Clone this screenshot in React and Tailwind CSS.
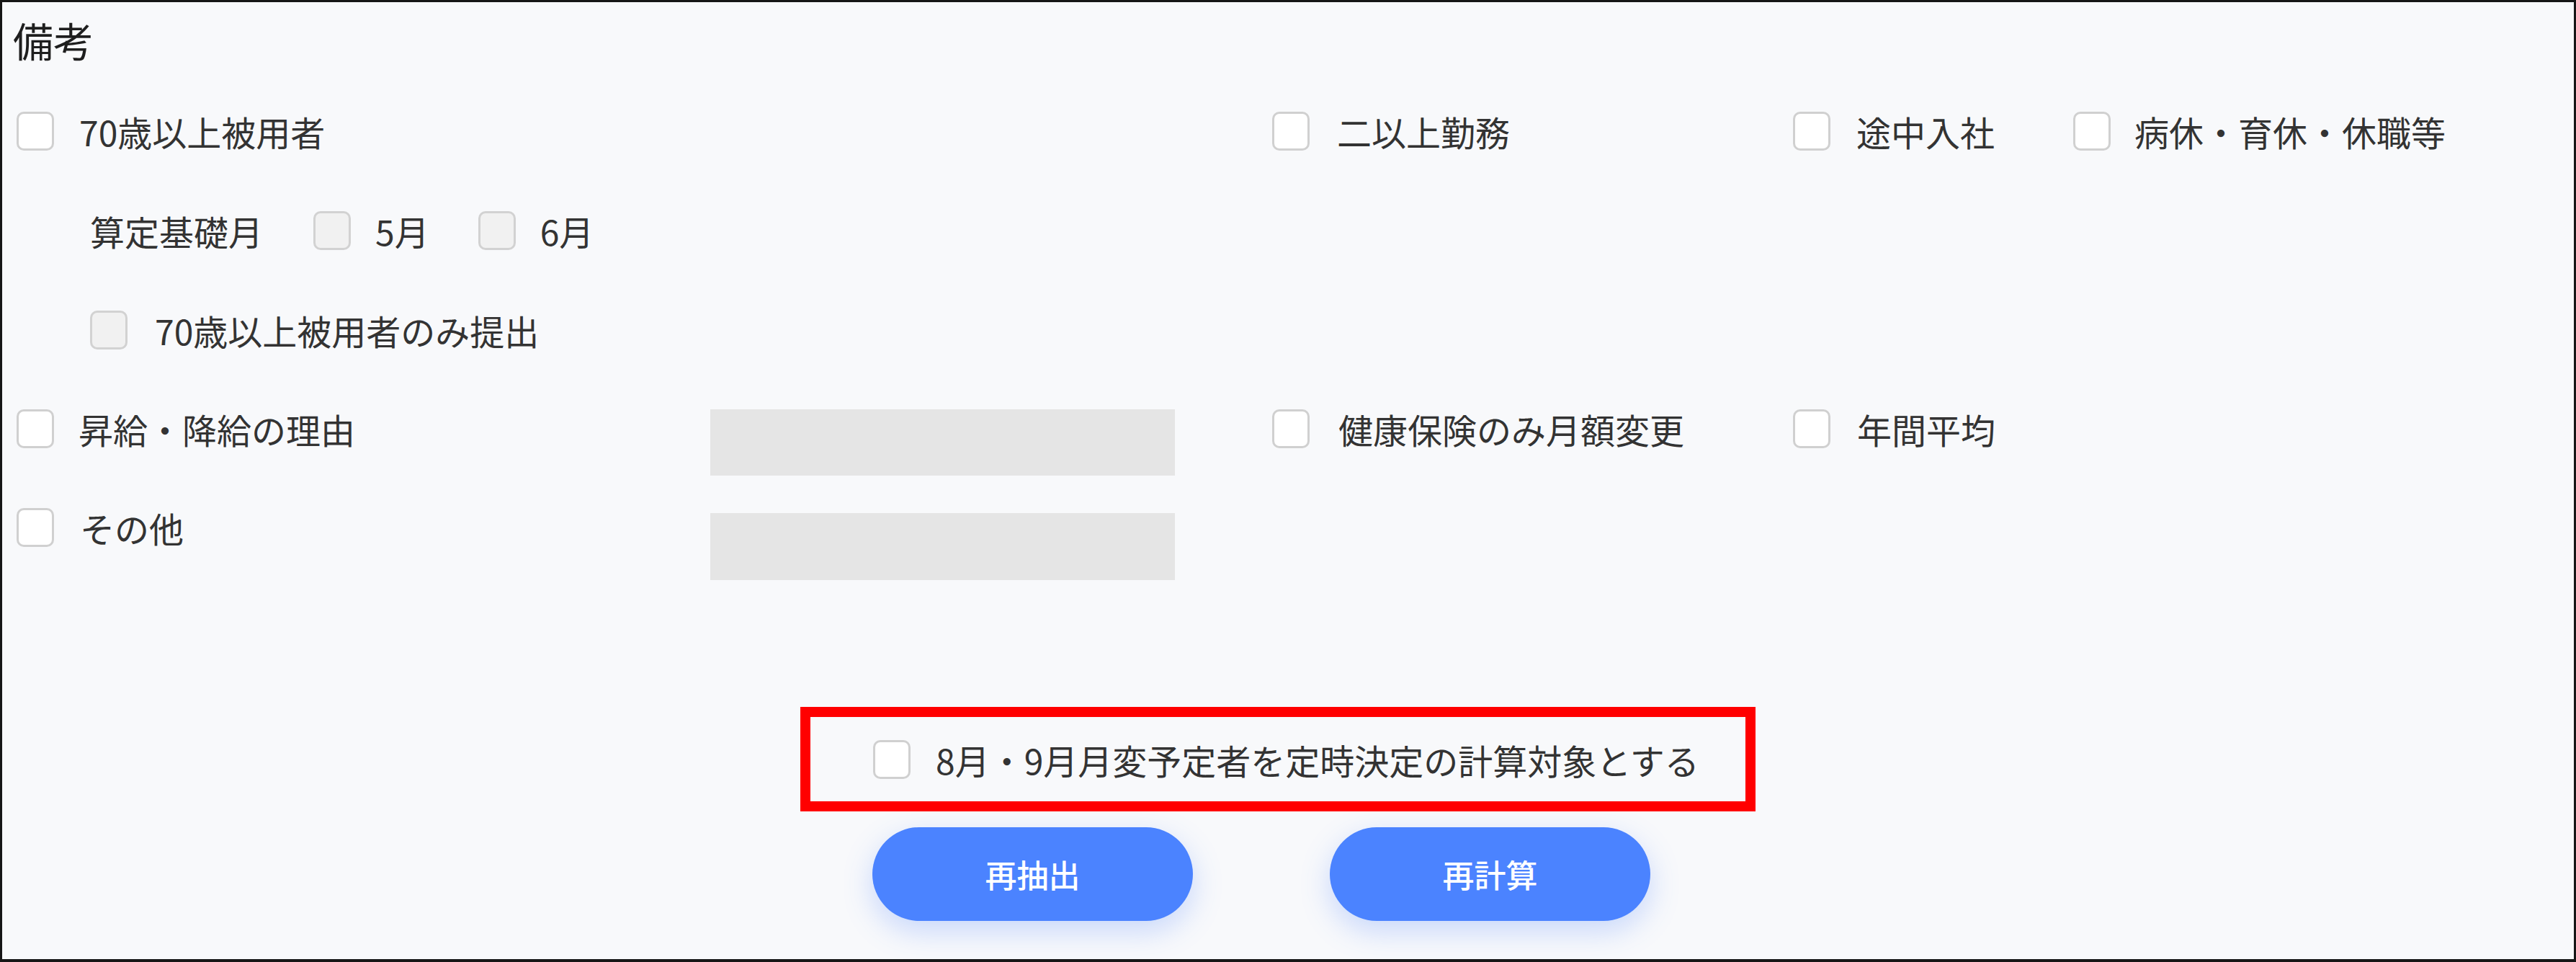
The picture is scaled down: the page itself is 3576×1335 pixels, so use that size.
const font = { fontFamily: '"Noto Sans CJK JP", "Noto Sans", sans-serif' };

function Box({ muted = false }) {
  return (
    <span
      className={`block w-[52px] h-[54px] shrink-0 rounded-[10px] border-[3px] ${
        muted ? 'bg-[#f1f1f1] border-[#d2d2d2]' : 'bg-white border-[#d0d0d0]'
      }`}
    />
  );
}

function Check({ label, muted, gap = 'gap-[35px]', className = '' }) {
  return (
    <label className={`flex items-center ${gap} ${className}`}>
      <Box muted={muted} />
      <span className="text-[48px] leading-none text-[#333] whitespace-nowrap">{label}</span>
    </label>
  );
}

function Field({ className = '' }) {
  return <div className={`bg-[#e5e5e5] ${className}`} />;
}

export default function App() {
  return (
    <div className="w-full h-screen bg-[#f8f9fb] border-[3px] border-b-4 border-[#161616] overflow-hidden" style={font}>
      <h2 className="ml-[15px] mt-[24px] text-[56px] leading-[56px] text-[#1e1e1e] font-normal">備考</h2>

      <div className="pl-[20px] mt-[30px]">
        {/* 1行目 */}
        <div className="flex items-center h-[138px]">
          <div className="w-[1743px]">
            <Check label="70歳以上被用者" />
          </div>
          <div className="w-[723px]">
            <Check label="二以上勤務" gap="gap-[38px]" />
          </div>
          <div className="w-[389px]">
            <Check label="途中入社" gap="gap-[36px]" />
          </div>
          <Check label="病休・育休・休職等" gap="gap-[33px]" />
        </div>

        {/* 算定基礎月 */}
        <div className="flex items-center h-[138px] pl-[102px]">
          <span className="text-[48px] leading-none text-[#333] mr-[70px]">算定基礎月</span>
          <Check label="5月" muted gap="gap-[34px]" className="mr-[68px]" />
          <Check label="6月" muted gap="gap-[34px]" />
        </div>

        <div className="flex items-center h-[138px] pl-[102px]">
          <Check label="70歳以上被用者のみ提出" muted gap="gap-[38px]" />
        </div>

        {/* 理由 */}
        <div className="flex items-start mt-[41px]">
          <div className="w-[963px]">
            <Check label="昇給・降給の理由" gap="gap-[34px]" />
          </div>
          <Field className="w-[645px] h-[92px]" />
          <div className="w-[135px]" />
          <div className="w-[723px]">
            <Check label="健康保険のみ月額変更" gap="gap-[40px]" />
          </div>
          <Check label="年間平均" gap="gap-[37px]" />
        </div>

        <div className="flex items-start mt-[45px]">
          <div className="w-[963px]">
            <Check label="その他" gap="gap-[36px]" />
          </div>
          <Field className="w-[645px] h-[93px] mt-[7px]" />
        </div>
      </div>

      {/* 対象チェック */}
      <div className="ml-[1108px] mt-[176px] w-[1326px] h-[145px] border-[14px] border-[#ff0000] flex items-center pl-[87px]">
        <Check label="8月・9月月変予定者を定時決定の計算対象とする" gap="gap-[35px]" />
      </div>

      <div className="flex ml-[1208px] mt-[22px] gap-[190px]">
        <button className="w-[445px] h-[130px] rounded-full bg-[#4b83ff] text-white text-[44px] font-medium shadow-[0_14px_40px_rgba(75,131,255,0.28)]">
          再抽出
        </button>
        <button className="w-[445px] h-[130px] rounded-full bg-[#4b83ff] text-white text-[44px] font-medium shadow-[0_14px_40px_rgba(75,131,255,0.28)]">
          再計算
        </button>
      </div>
    </div>
  );
}
